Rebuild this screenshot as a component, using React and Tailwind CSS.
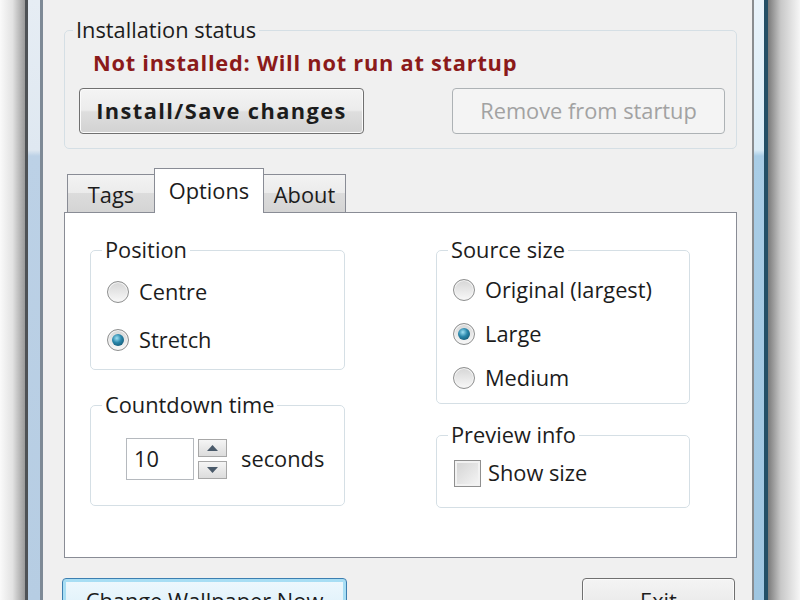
const btnFace =
    "border border-[#707070] rounded-[4px] bg-[linear-gradient(to_bottom,#f4f4f4_0%,#ececec_48%,#dedede_52%,#d2d2d2_100%)] shadow-[inset_0_0_0_1px_#fbfbfb]";

const Group = ({ label, className = "", legend = "ml-[11px]", children }) => (
    <fieldset className={`border border-[#d5dfe5] rounded-[5px] ${className}`}>
        <legend className={`${legend} px-[3px] leading-[26px]`}>{label}</legend>
        {children}
    </fieldset>
);

const Radio = ({ label, checked, className = "" }) => (
    <div className={`flex items-center h-[30px] pl-[16px] gap-[10px] ${className}`}>
        <span className="w-[22px] h-[22px] rounded-full border border-[#8e8f8f] bg-[linear-gradient(to_bottom,#d6d6d6,#f8f8f8)] flex items-center justify-center shadow-[inset_0_0_0_1px_#f4f4f4]">
            {checked && (
                <span className="w-[12px] h-[12px] rounded-full bg-[radial-gradient(circle_at_40%_35%,#9fe0f3_0%,#2a87ab_42%,#0b455e_100%)]" />
            )}
        </span>
        <span>{label}</span>
    </div>
);

const Tab = ({ label, selected, className = "" }) =>
    selected ? (
        <div
            className={`relative z-10 -mb-px h-[45px] bg-white border border-b-0 border-[#898c95] flex items-center justify-center ${className}`}
        >
            {label}
        </div>
    ) : (
        <div
            className={`h-[38px] pt-[3px] border border-b-0 border-[#898c95] bg-[linear-gradient(to_bottom,#f3f3f3_0%,#ebebeb_50%,#dcdcdc_50%,#d4d4d4_100%)] flex items-center justify-center ${className}`}
        >
            {label}
        </div>
    );

const Arrow = ({ up }) => (
    <div className="w-[29px] h-[18px] border border-[#a7a7a7] bg-[linear-gradient(to_bottom,#f5f5f5,#dcdcdc)] flex items-center justify-center">
        <svg width="11" height="6" viewBox="0 0 11 6">
            {up ? <polygon points="0,6 11,6 5.5,0" fill="#4a5a6a" /> : <polygon points="0,0 11,0 5.5,6" fill="#4a5a6a" />}
        </svg>
    </div>
);

export default function App() {
    return (
        <div className="w-[800px] h-[600px] overflow-hidden flex bg-white font-['Open_Sans',sans-serif] text-[21.8px] text-[#1c1c1c]">
            {/* left window edge */}
            <div className="w-[25px] shrink-0 bg-[linear-gradient(to_right,#fafafa,#e2e2e2_50%,#9a9a9a)]" />
            <div className="w-[3px] shrink-0 bg-[#4e5256]" />
            <div className="w-[12px] shrink-0 bg-[linear-gradient(to_bottom,#e6edf4_0,#dfe8f1_150px,#bcd1e6_156px,#b6cde3_100%)]" />
            <div className="w-[3px] shrink-0 bg-[#7e8a96]" />

            {/* dialog body */}
            <div className="w-[709px] shrink-0 bg-[#f0f0f0] pl-[21px] pr-[15px] pt-[17px]">
                <Group label="Installation status" legend="ml-[8px]" className="pb-[14px]">
                    <div className="pl-[28px] mt-[6px] leading-[28px] font-bold tracking-[0.75px] text-[#8b1a1a]">
                        Not installed: Will not run at startup
                    </div>
                    <div className="flex justify-between pl-[14px] pr-[11px] mt-[11px]">
                        <button className={`w-[285px] h-[46px] font-bold tracking-[1.4px] ${btnFace}`}>Install/Save changes</button>
                        <button className="w-[273px] h-[46px] border border-[#adb2b5] rounded-[4px] bg-[#f4f4f4] text-[#a2a2a2]">
                            Remove from startup
                        </button>
                    </div>
                </Group>

                {/* tabs */}
                <div className="flex items-end mt-[19px] pl-[3px]">
                    <Tab label="Tags" className="w-[88px]" />
                    <Tab label="Options" selected className="w-[110px] -ml-px" />
                    <Tab label="About" className="w-[83px] -ml-px" />
                </div>
                <div className="h-[346px] bg-white border border-[#898c95] flex gap-[91px] pl-[25px] pt-[24px]">
                    <div className="w-[255px] flex flex-col gap-[22px]">
                        <Group label="Position" className="pb-[14px]">
                            <Radio label="Centre" className="mt-[14px]" />
                            <Radio label="Stretch" checked className="mt-[18px]" />
                        </Group>
                        <Group label="Countdown time" className="pb-[25px]">
                            <div className="flex items-center pl-[35px] mt-[20px]">
                                <div className="w-[68px] h-[42px] border border-[#b5b9be] bg-white pl-[7px] leading-[40px]">10</div>
                                <div className="flex flex-col gap-[4px] ml-[4px]">
                                    <Arrow up />
                                    <Arrow />
                                </div>
                                <span className="ml-[14px]">seconds</span>
                            </div>
                        </Group>
                    </div>
                    <div className="w-[254px] flex flex-col gap-[18px]">
                        <Group label="Source size" className="pb-[10px]">
                            <Radio label="Original (largest)" className="mt-[12px]" />
                            <Radio label="Large" checked className="mt-[14px]" />
                            <Radio label="Medium" className="mt-[14px]" />
                        </Group>
                        <Group label="Preview info" className="pb-[19px]">
                            <div className="flex items-center h-[30px] mt-[10px] pl-[17px] gap-[7px]">
                                <span className="w-[27px] h-[27px] border border-[#8f8f8f] bg-[linear-gradient(135deg,#d2d2d2,#f6f6f6)] shadow-[inset_0_0_0_2px_#f2f2f2]" />
                                <span>Show size</span>
                            </div>
                        </Group>
                    </div>
                </div>

                {/* bottom buttons */}
                <div className="flex justify-between mt-[20px] ml-[-2px] mr-[2px]">
                    <button className="w-[285px] h-[46px] border border-[#3c7fb1] rounded-[4px] bg-[linear-gradient(to_bottom,#eef8fd,#d8eef9)] shadow-[inset_0_0_0_3px_#a8def4]">
                        Change Wallpaper Now
                    </button>
                    <button className={`w-[153px] h-[46px] ${btnFace}`}>Exit</button>
                </div>
            </div>

            {/* right window edge */}
            <div className="w-[2px] shrink-0 bg-[#8a8d90]" />
            <div className="w-[10px] shrink-0 bg-[linear-gradient(to_bottom,#e9f3fa_0,#d9ebf6_150px,#a9cde6_156px,#9fc6e1_100%)]" />
            <div className="w-[4px] shrink-0 bg-[#234f66]" />
            <div className="flex-1 bg-[linear-gradient(to_right,#7a7a7a,#c8c8c8_40%,#f6f6f6)]" />
        </div>
    );
}
